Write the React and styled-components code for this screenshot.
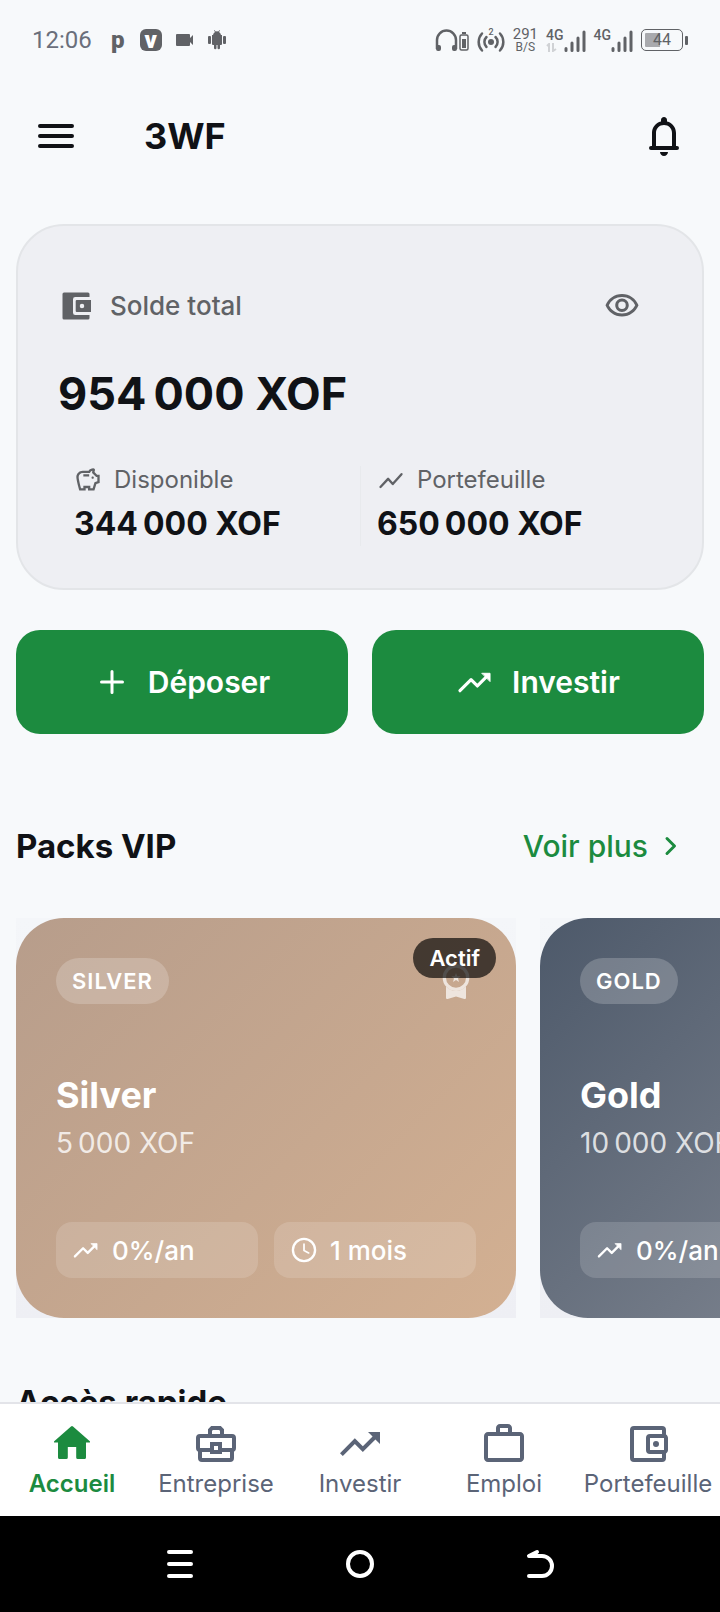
import React, { useState } from 'react';
import styled, { createGlobalStyle } from 'styled-components';
import { MdOutlineSavings, MdOutlineVisibility, MdOutlineWorkOutline } from 'react-icons/md';

const GlobalStyle = createGlobalStyle`
  *, *::before, *::after {
    box-sizing: border-box;
  }

  body {
    margin: 0;
    background: #f7f9fb;
    color: #101216;
    font-family: Inter, 'Open Sans', sans-serif;
  }

  button {
    font: inherit;
    color: inherit;
    background: none;
    border: none;
    padding: 0;
    cursor: pointer;
  }

  a {
    color: inherit;
    text-decoration: none;
  }

  h1, h2, h3, p {
    margin: 0;
  }

  svg {
    display: block;
    flex-shrink: 0;
  }
`;

const Screen = styled.div`
  display: flex;
  flex-direction: column;
  height: 100vh;
  overflow: hidden;
`;

/* ---- status bar ---- */

const StatusBar = styled.div`
  display: flex;
  align-items: center;
  justify-content: space-between;
  flex-shrink: 0;
  height: 80px;
  padding: 0 32px;
  color: #606266;
  font-family: Roboto, sans-serif;
`;

const StatusGroup = styled.div`
  display: flex;
  align-items: center;
  gap: ${({ $gap }) => $gap}px;
`;

const Clock = styled.span`
  margin-right: 4px;
  color: #6a6f7b;
  font-size: 24px;
  font-weight: 400;
`;

const AppMark = styled.span`
  display: flex;
  align-items: center;
  justify-content: center;
  width: ${({ $boxed }) => ($boxed ? 22 : 16)}px;
  height: 22px;
  border-radius: 6px;
  background: ${({ $boxed }) => ($boxed ? '#606266' : 'transparent')};
  color: ${({ $boxed }) => ($boxed ? '#fff' : '#606266')};
  font-size: 24px;
  font-weight: 900;
  line-height: 22px;
`;

const Speed = styled.span`
  display: flex;
  flex-direction: column;
  align-items: center;
  font-size: 15px;
  font-weight: 400;
  line-height: 14px;

  small {
    font-size: 12px;
    line-height: 12px;
  }
`;

const Signal = styled.span`
  display: flex;
  align-items: flex-end;
`;

const Network = styled.span`
  display: flex;
  flex-direction: column;
  height: 24px;
  font-size: 14px;
  font-weight: 500;
  line-height: 15px;
`;

const Battery = styled.span`
  display: flex;
  align-items: center;
  justify-content: center;
  width: 42px;
  height: 22px;
  padding: 3px;
  border: 1px solid #606266;
  border-radius: 5px;
  background: linear-gradient(to right, #a9aaae 44%, transparent 44%) content-box;
  font-size: 16px;
  line-height: 16px;
`;

const BatteryTip = styled.span`
  width: 3px;
  height: 9px;
  border-radius: 1px;
  background: #606266;
`;

/* ---- app header ---- */

const Header = styled.header`
  display: flex;
  align-items: center;
  flex-shrink: 0;
  height: 112px;
  padding: 0 32px;
`;

const IconButton = styled.button`
  display: flex;
  align-items: center;
  justify-content: center;
  width: ${({ $size = 48 }) => $size}px;
  height: ${({ $size = 48 }) => $size}px;
`;

const Title = styled.h1`
  flex: 1;
  margin-left: 64px;
  font-size: 36px;
  font-weight: 700;
  line-height: 48px;
`;

const Content = styled.main`
  flex: 1;
  min-height: 0;
  padding-top: 32px;
  overflow-y: auto;
  scrollbar-width: none;
`;

/* ---- balance ---- */

const BalanceCard = styled.section`
  margin: 0 16px;
  padding: 40px;
  border: 2px solid #e3e5e8;
  border-radius: 48px;
  background: #eeeff3;
`;

const BalanceTop = styled.div`
  display: flex;
  align-items: center;
  gap: 16px;
  color: #606266;
`;

const BalanceLabel = styled.span`
  flex: 1;
  font-size: 26px;
  font-weight: 500;
  line-height: 32px;
`;

const Total = styled.p`
  margin-top: 16px;
  font-size: 45px;
  font-weight: 700;
  line-height: 64px;
`;

const Stats = styled.div`
  display: grid;
  grid-template-columns: 1fr 1fr;
  margin: 40px 0 2px;
`;

const Stat = styled.div`
  display: flex;
  flex-direction: column;
  gap: 8px;
  padding: 0 16px;

  & + & {
    border-left: 1px solid #e8eaed;
  }
`;

const StatLabel = styled.span`
  display: flex;
  align-items: center;
  gap: 12px;
  color: #606266;
  font-size: 24px;
  line-height: 28px;
`;

const StatValue = styled.span`
  font-size: 32px;
  font-weight: 700;
  line-height: 44px;
`;

const Actions = styled.div`
  display: grid;
  grid-template-columns: 1fr 1fr;
  gap: 24px;
  margin: 40px 16px 0;
`;

const ActionButton = styled.button`
  display: flex;
  align-items: center;
  justify-content: center;
  gap: 18px;
  height: 104px;
  border-radius: 24px;
  background: #1c8b3f;
  color: #fff;
  font-size: 30px;
  font-weight: 600;
`;

/* ---- packs ---- */

const SectionHeader = styled.div`
  display: flex;
  align-items: center;
  justify-content: space-between;
  height: 80px;
  margin-top: ${({ $top }) => $top}px;
  padding: 0 32px 0 16px;
`;

const SectionTitle = styled.h2`
  font-size: 33px;
  font-weight: 700;
  line-height: 40px;
`;

const MoreLink = styled.a`
  display: flex;
  align-items: center;
  gap: 4px;
  color: #1c8b3f;
  font-size: 30px;
  font-weight: 500;
`;

const Carousel = styled.div`
  display: flex;
  gap: 24px;
  margin-top: 32px;
  padding: 0 16px;
  overflow-x: auto;
  scrollbar-width: none;
`;

const PackFrame = styled.div`
  flex: 0 0 500px;
  background: linear-gradient(#f4f6f9, #eeeff4);
`;

const PackCard = styled.article`
  position: relative;
  display: flex;
  flex-direction: column;
  justify-content: space-between;
  height: 400px;
  padding: 40px;
  border-radius: 48px;
  background: linear-gradient(135deg, ${({ $from }) => $from}, ${({ $to }) => $to});
  color: #fff;
`;

const PackTop = styled.div`
  display: flex;
  align-items: center;
  justify-content: space-between;
  height: 46px;
  color: rgba(255, 255, 255, 0.7);
`;

const Tier = styled.span`
  padding: 0 16px;
  border-radius: 23px;
  background: rgba(255, 255, 255, 0.2);
  color: #fff;
  font-size: 22px;
  font-weight: 600;
  letter-spacing: 1px;
  line-height: 46px;
`;

const ActiveBadge = styled.span`
  position: absolute;
  top: 20px;
  right: 20px;
  padding: 0 16px;
  border-radius: 20px;
  background: rgba(0, 0, 0, 0.66);
  font-size: 22px;
  font-weight: 600;
  line-height: 40px;
`;

const PackInfo = styled.div`
  padding-top: 8px;
`;

const PackName = styled.h3`
  font-size: 36px;
  font-weight: 700;
  line-height: 48px;
`;

const PackPrice = styled.p`
  margin-top: 4px;
  color: rgba(255, 255, 255, 0.8);
  font-size: 28px;
  line-height: 40px;
`;

const Chips = styled.div`
  display: grid;
  grid-template-columns: 1fr 1fr;
  gap: 16px;
`;

const Chip = styled.span`
  display: flex;
  align-items: center;
  gap: 12px;
  height: 56px;
  padding: 0 16px;
  border-radius: 16px;
  background: rgba(255, 255, 255, 0.15);
  font-size: 26px;
  font-weight: 500;
`;

/* ---- bottom bars ---- */

const TabBar = styled.nav`
  display: grid;
  grid-template-columns: repeat(5, 1fr);
  flex-shrink: 0;
  border-top: 2px solid #e3e4e9;
  background: #fff;
`;

const Tab = styled.a`
  display: flex;
  flex-direction: column;
  align-items: center;
  padding: 16px 0;
  color: ${({ $active }) => ($active ? '#1c8b3f' : '#5b6477')};
  font-size: 24px;
  font-weight: ${({ $active }) => ($active ? 600 : 400)};
  line-height: 32px;
`;

const SystemBar = styled.div`
  display: grid;
  grid-template-columns: repeat(3, 1fr);
  align-items: center;
  justify-items: center;
  flex-shrink: 0;
  height: 96px;
  padding: 0 12.5%;
  background: #000;
  color: #fff;
`;

/* ---- icons ---- */

const Icon = ({ size = 24, children }) => (
  <svg width={size} height={size} viewBox="0 0 24 24" fill="currentColor" aria-hidden="true">
    {children}
  </svg>
);

const Line = ({ size = 24, children }) => (
  <svg
    width={size}
    height={size}
    viewBox="0 0 24 24"
    fill="none"
    stroke="currentColor"
    strokeWidth="2"
    strokeLinecap="round"
    strokeLinejoin="round"
    aria-hidden="true"
  >
    {children}
  </svg>
);

const MenuIcon = () => (
  <Line size={48}>
    <path d="M4 7h16M4 12h16M4 17h16" />
  </Line>
);

const BellIcon = () => (
  <Icon size={48}>
    <path d="M12 2.5c-.9 0-1.5.7-1.5 1.5v.7C7.8 5.3 6 7.7 6 10.500V17h-.5a1 1 0 0 0 0 2h13a1 1 0 0 0 0-2H18v-6.5c0-2.800-1.800-5.200-4.500-5.800V4c0-.8-.6-1.500-1.500-1.500zM8 17v-6.500c0-2.300 1.700-4 4-4s4 1.700 4 4V17zM10 20h4c0 1.100-.9 2-2 2s-2-.9-2-2z" />
  </Icon>
);

const WalletIcon = () => (
  <Icon size={36}>
    <path d="M21 18v2a1 1 0 0 1-1 1H4a1 1 0 0 1-1-1V4a1 1 0 0 1 1-1h16a1 1 0 0 1 1 1v2h-9.500A1.500 1.500 0 0 0 10 7.500v9a1.500 1.500 0 0 0 1.500 1.500zM12.500 8H22v8h-9.500a.7.7 0 0 1-.7-.7V8.700a.7.7 0 0 1 .7-.7zM16 13.500a1.500 1.500 0 1 0 0-3 1.500 1.500 0 0 0 0 3z" />
  </Icon>
);

const WalletOutlineIcon = () => (
  <Icon size={48}>
    <path d="M5 3a2 2 0 0 0-2 2v14a2 2 0 0 0 2 2h14a2 2 0 0 0 2-2v-2.280c.59-.35 1-.98 1-1.720V9c0-.74-.41-1.370-1-1.720V5a2 2 0 0 0-2-2zm0 2h14v2h-6a2 2 0 0 0-2 2v6a2 2 0 0 0 2 2h6v2H5zm8 4h7v6h-7zm3 1.500a1.500 1.500 0 1 0 0 3 1.500 1.500 0 0 0 0-3z" />
  </Icon>
);

const HomeIcon = () => (
  <Icon size={48}>
    <path d="M11.500 3.200a.7.7 0 0 1 1 0l8.400 7.400c.3.300.1.700-.3.700H19v7.400a.8.8 0 0 1-.8.8h-3.300a.8.8 0 0 1-.8-.8V13.500H9.900v5.200a.8.8 0 0 1-.8.8H5.800a.8.8 0 0 1-.8-.8v-7.400H3.400c-.4 0-.6-.4-.3-.7z" />
  </Icon>
);

const BusinessIcon = () => (
  <svg width="48" height="48" viewBox="0 0 24 24" fill="none" stroke="currentColor" strokeWidth="2" aria-hidden="true">
    <path d="M9 8V5l1-1h4l1 1v3" />
    <path d="M10 15H4a1 1 0 0 1-1-1V9a1 1 0 0 1 1-1h16a1 1 0 0 1 1 1v5a1 1 0 0 1-1 1h-6" />
    <path d="M4 15v4a1 1 0 0 0 1 1h14a1 1 0 0 0 1-1v-4M10 12h4v4h-4z" />
  </svg>
);

const TrendIcon = () => (
  <Icon size={48}>
    <path d="M16 6l2.290 2.290-4.880 4.880-4-4L2 16.590 3.410 18l6-6 4 4 6.300-6.290L22 12V6z" />
  </Icon>
);

const TrendRoundIcon = ({ size }) => (
  <Line size={size}>
    <path d="M2.500 17.500l7-7 4 4 6-6" />
    <path d="M16.500 6.500h5v5z" fill="currentColor" strokeWidth="0.6" />
  </Line>
);

const MedalIcon = () => (
  <Icon size={40}>
    <circle cx="12" cy="10" r="7" fill="none" stroke="currentColor" strokeWidth="2" />
    <path d="M6 15.300c1.500 1.600 3.600 2.700 6 2.700s4.500-1.100 6-2.700V22c0 .6-.5 1-1 .8L12 21.300l-5 1.500c-.5.200-1-.2-1-.8z" />
    <path d="M12 7.200l.8 2h2l-1.600 1.300.6 2.100-1.800-1.200-1.800 1.200.6-2.100-1.600-1.300h2z" />
  </Icon>
);

const CameraIcon = () => (
  <svg width="18" height="14" viewBox="0 0 18 14" fill="currentColor" aria-hidden="true">
    <path d="M1 1h12a1 1 0 0 1 1 1v3l3-3v10l-3-3v3a1 1 0 0 1-1 1H1a1 1 0 0 1-1-1V2a1 1 0 0 1 1-1z" />
  </svg>
);

const RobotIcon = () => (
  <svg width="18" height="20" viewBox="0 0 18 20" fill="currentColor" aria-hidden="true">
    <path d="M5 5a4.500 4.500 0 0 1 2-3L6 .5l.5-.5 1.200 1.500a5 5 0 0 1 2.600 0L11.500 0l.5.5L11 2a4.500 4.500 0 0 1 2 3h1v9a1 1 0 0 1-1 1h-1v3a1 1 0 0 1-2.500 0v-3h-1v3A1 1 0 0 1 6 18v-3H5a1 1 0 0 1-1-1V5z" />
    <rect x="0" y="6" width="3" height="8" rx="1" />
    <rect x="15" y="6" width="3" height="8" rx="1" />
  </svg>
);

const HeadphonesIcon = () => (
  <svg width="34" height="24" viewBox="0 0 34 24" fill="none" stroke="currentColor" aria-hidden="true">
    <path d="M2 21v-9a9.500 9.500 0 0 1 19 0v9" strokeWidth="2.500" />
    <path d="M1 17h3a2 2 0 0 1 2 2v2a2 2 0 0 1-2 2H3a2 2 0 0 1-2-2zM22 17h-3a2 2 0 0 0-2 2v2a2 2 0 0 0 2 2h1a2 2 0 0 0 2-2z" fill="currentColor" stroke="none" />
    <rect x="25" y="7" width="8" height="15" rx="1.500" strokeWidth="1.500" />
    <path d="M27 11h4v9h-4zM27 4h4v2h-4z" fill="currentColor" stroke="none" />
  </svg>
);

const HotspotIcon = () => (
  <svg width="28" height="26" viewBox="0 0 28 26" fill="none" stroke="currentColor" strokeWidth="2.500" strokeLinecap="round" aria-hidden="true">
    <circle cx="14" cy="15" r="3" fill="currentColor" stroke="none" />
    <path d="M9.500 10a7 7 0 0 0 0 10M18.500 10a7 7 0 0 1 0 10M5 6.500a12.500 12.500 0 0 0 0 17M23 6.500a12.500 12.500 0 0 1 0 17" />
    <text x="14" y="8" textAnchor="middle" fontSize="9" fontWeight="500" fill="currentColor" stroke="none">2</text>
  </svg>
);

const BarsIcon = () => (
  <svg width="22" height="22" viewBox="0 0 22 22" stroke="currentColor" strokeWidth="3" strokeLinecap="round" aria-hidden="true">
    <path d="M2 18.500v2M8 13v7.500M14 8v12.500M20 2v18.500" />
  </svg>
);

const packs = [
  { name: 'Silver', price: 5000, rate: '0%/an', length: '1 mois', from: '#b79d8b', to: '#d3b092', active: true },
  { name: 'Gold', price: 10000, rate: '0%/an', length: '1 mois', from: '#4d596a', to: '#8b909a' },
];

const tabs = [
  { label: 'Accueil', icon: <HomeIcon />, active: true },
  { label: 'Entreprise', icon: <BusinessIcon /> },
  { label: 'Investir', icon: <TrendIcon /> },
  { label: 'Emploi', icon: <MdOutlineWorkOutline size={48} /> },
  { label: 'Portefeuille', icon: <WalletOutlineIcon /> },
];

// Group thousands with a narrow no-break space, then add the currency
const formatAmount = (value) => `${String(value).replace(/\B(?=(\d{3})+$)/g, '\u202f')} XOF`;

function Pack({ pack }) {
  return (
    <PackFrame>
      <PackCard $from={pack.from} $to={pack.to}>
        <PackTop>
          <Tier>{pack.name.toUpperCase()}</Tier>
          <MedalIcon />
        </PackTop>
        <PackInfo>
          <PackName>{pack.name}</PackName>
          <PackPrice>{formatAmount(pack.price)}</PackPrice>
        </PackInfo>
        <Chips>
          <Chip>
            <TrendRoundIcon size={28} />
            {pack.rate}
          </Chip>
          <Chip>
            <Line size={28}>
              <circle cx="12" cy="12" r="9.500" />
              <path d="M12 7v5.500l4 2" strokeWidth="1.500" />
            </Line>
            {pack.length}
          </Chip>
        </Chips>
        {pack.active && <ActiveBadge>Actif</ActiveBadge>}
      </PackCard>
    </PackFrame>
  );
}

export default function App() {
  const [visible, setVisible] = useState(true);
  const amount = (value) => (visible ? formatAmount(value) : '••••••');

  return (
    <Screen>
      <GlobalStyle />
      <StatusBar>
        <StatusGroup $gap={14}>
          <Clock>12:06</Clock>
          <AppMark>p</AppMark>
          <AppMark $boxed>v</AppMark>
          <CameraIcon />
          <RobotIcon />
        </StatusGroup>
        <StatusGroup $gap={8}>
          <HeadphonesIcon />
          <HotspotIcon />
          <Speed>
            291
            <small>B/S</small>
          </Speed>
          <StatusGroup $gap={8}>
            <Signal>
              <Network>
                4G
                <svg width="12" height="9" viewBox="0 0 12 9" fill="none" stroke="#d0d2d5" strokeWidth="2">
                  <path d="M1 3l2-2v8M7 0v8l3-2" />
                </svg>
              </Network>
              <BarsIcon />
            </Signal>
            <Signal>
              <Network>4G</Network>
              <BarsIcon />
            </Signal>
            <StatusGroup $gap={2}>
              <Battery>44</Battery>
              <BatteryTip />
            </StatusGroup>
          </StatusGroup>
        </StatusGroup>
      </StatusBar>

      <Header>
        <IconButton aria-label="Menu">
          <MenuIcon />
        </IconButton>
        <Title>3WF</Title>
        <IconButton aria-label="Notifications">
          <BellIcon />
        </IconButton>
      </Header>

      <Content>
        <BalanceCard>
          <BalanceTop>
            <WalletIcon />
            <BalanceLabel>Solde total</BalanceLabel>
            <IconButton $size={80} aria-label="Afficher le solde" onClick={() => setVisible(!visible)}>
              <MdOutlineVisibility size={36} />
            </IconButton>
          </BalanceTop>
          <Total>{amount(954000)}</Total>
          <Stats>
            <Stat>
              <StatLabel>
                <MdOutlineSavings size={28} />
                Disponible
              </StatLabel>
              <StatValue>{amount(344000)}</StatValue>
            </Stat>
            <Stat>
              <StatLabel>
                <Line size={28}>
                  <path d="M3 18l6.500-7 4 4.500L21 7" />
                </Line>
                Portefeuille
              </StatLabel>
              <StatValue>{amount(650000)}</StatValue>
            </Stat>
          </Stats>
        </BalanceCard>

        <Actions>
          <ActionButton>
            <Line size={36}>
              <path d="M12 5v14M5 12h14" />
            </Line>
            Déposer
          </ActionButton>
          <ActionButton>
            <TrendRoundIcon size={38} />
            Investir
          </ActionButton>
        </Actions>

        <SectionHeader $top={72}>
          <SectionTitle>Packs VIP</SectionTitle>
          <MoreLink href="#packs">
            Voir plus
            <Line size={36}>
              <path d="M10 7l5 5-5 5" />
            </Line>
          </MoreLink>
        </SectionHeader>
        <Carousel>
          {packs.map((pack) => (
            <Pack key={pack.name} pack={pack} />
          ))}
        </Carousel>

        <SectionHeader $top={44}>
          <SectionTitle>Accès rapide</SectionTitle>
        </SectionHeader>
      </Content>

      <TabBar>
        {tabs.map((tab) => (
          <Tab key={tab.label} href={`#${tab.label.toLowerCase()}`} $active={tab.active}>
            {tab.icon}
            {tab.label}
          </Tab>
        ))}
      </TabBar>
      <SystemBar>
        <IconButton aria-label="Applications récentes">
          <Line size={48}>
            <path d="M6.500 6h11M6.500 12h11M6.500 18h11" />
          </Line>
        </IconButton>
        <IconButton aria-label="Écran d'accueil">
          <Line size={48}>
            <circle cx="12" cy="12" r="6" />
          </Line>
        </IconButton>
        <IconButton aria-label="Retour">
          <Line size={48}>
            <path d="M10.500 6L6.500 8h6.500a5 5 0 0 1 0 10H6.500" />
          </Line>
        </IconButton>
      </SystemBar>
    </Screen>
  );
}
